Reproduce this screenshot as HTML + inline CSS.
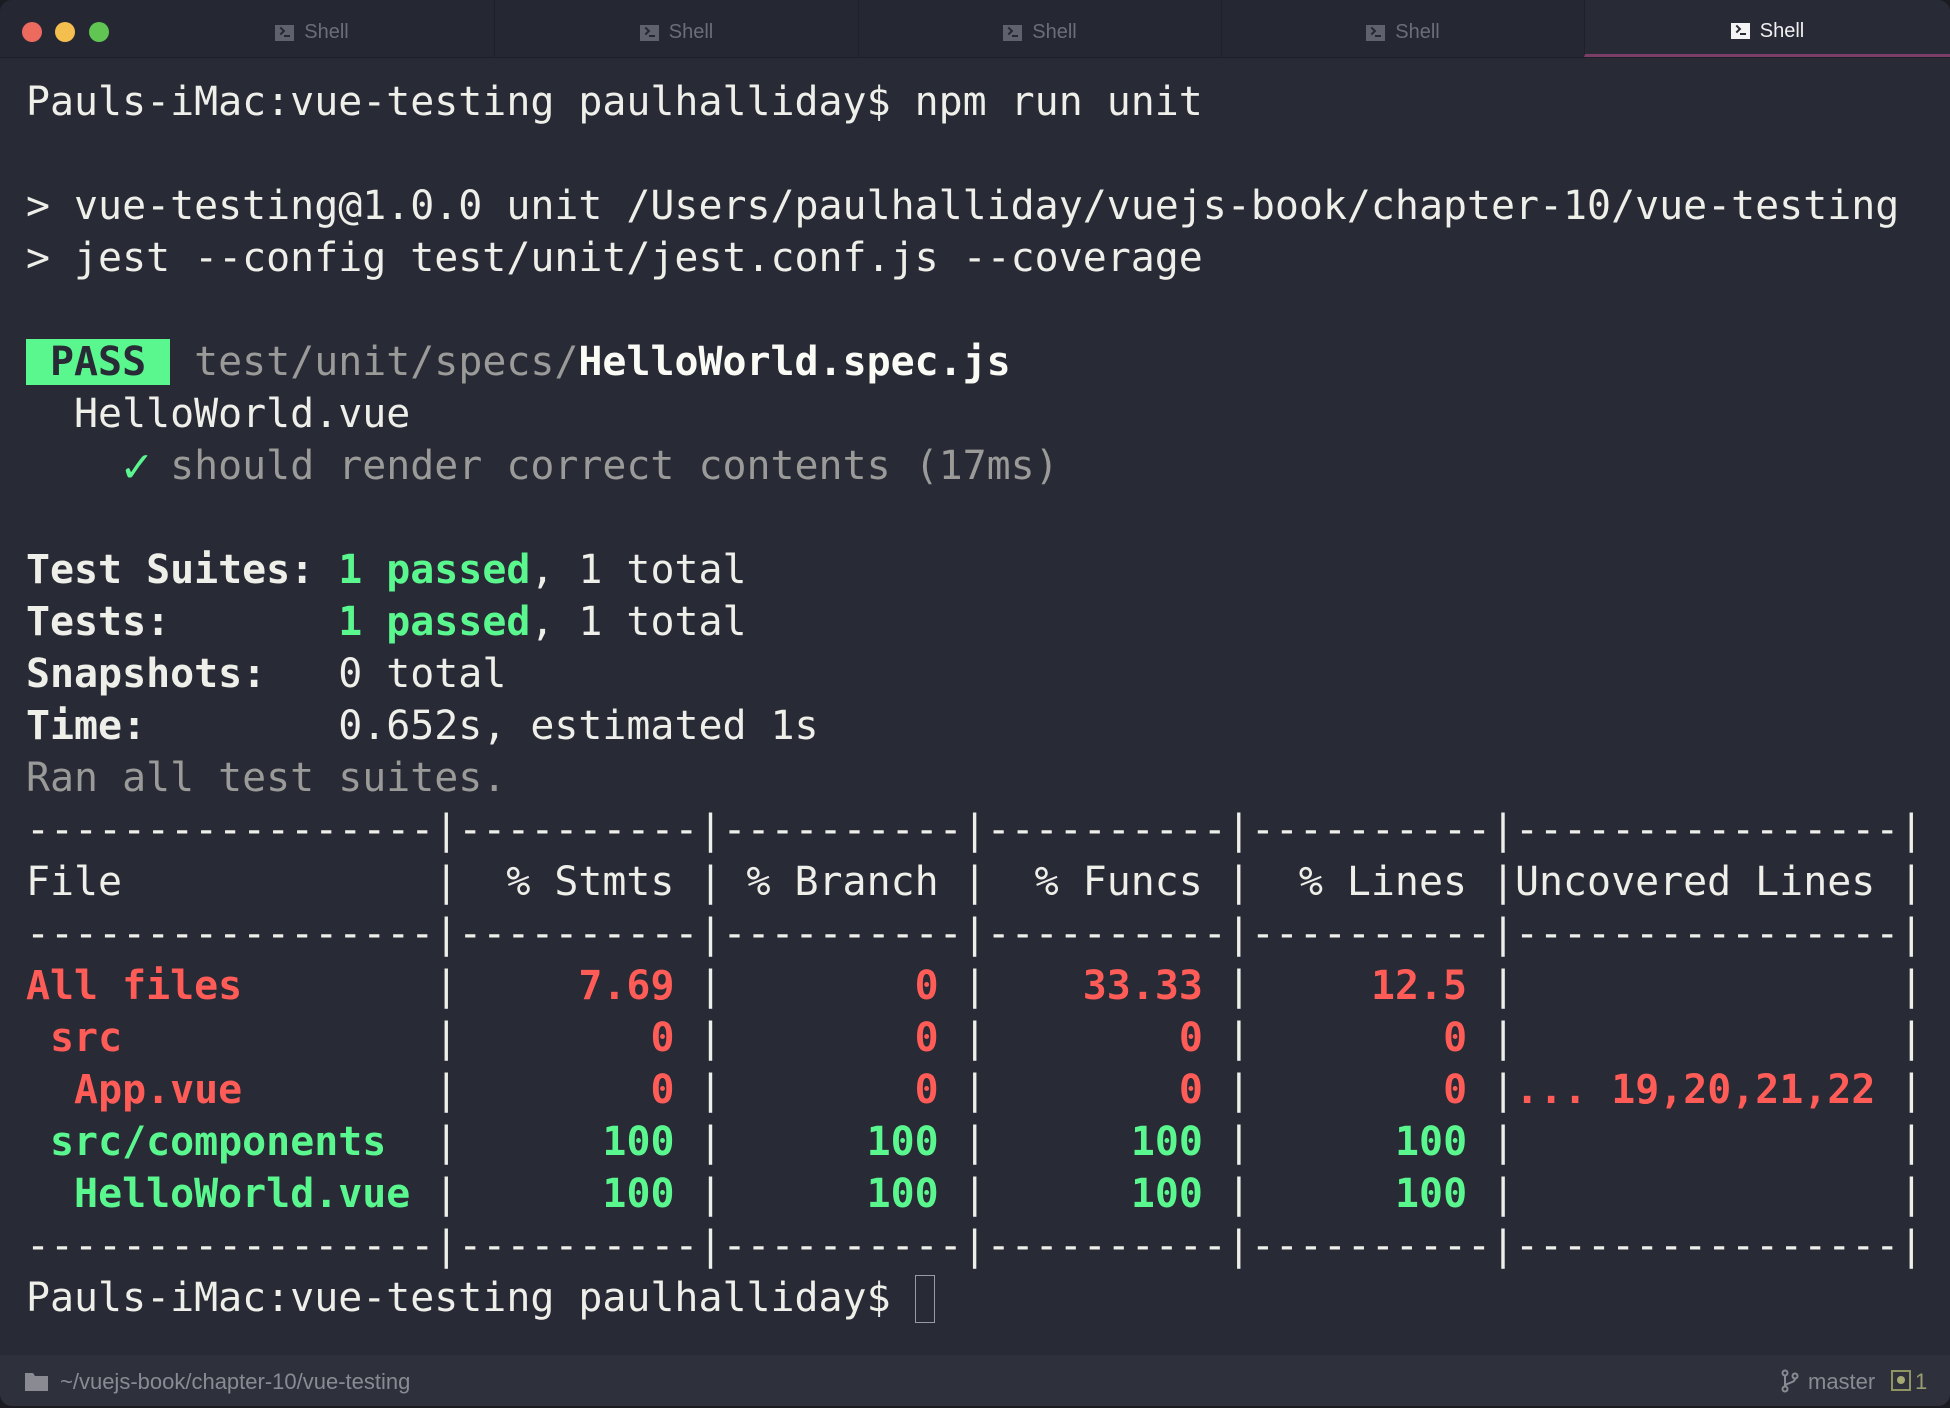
<!DOCTYPE html>
<html><head><meta charset="utf-8"><style>
html,body{margin:0;padding:0;background:#1b1c22;}
#win{position:relative;width:1950px;height:1406px;background:#282a36;border-radius:12px;overflow:hidden;}
#tabs{position:absolute;left:0;top:0;width:1950px;height:57px;background:#252733;border-bottom:1px solid #1e1f28;}
.dot{position:absolute;top:22px;width:20px;height:20px;border-radius:50%;}
.tab{position:absolute;top:0;height:57px;box-sizing:border-box;padding-top:8px;border-left:1px solid #1f2029;font:20px "Liberation Sans",sans-serif;color:#6b6d78;display:flex;align-items:center;justify-content:center;}
.tab .ic{width:19px;height:16px;background:#5f616d;margin-right:10px;position:relative;}
.tab .ic:after{content:"";position:absolute;left:3px;top:3px;width:4px;height:4px;border-right:2px solid #252733;border-bottom:2px solid #252733;transform:rotate(-45deg);}
.tab .ic:before{content:"";position:absolute;left:9px;top:10px;width:6px;height:2px;background:#252733;}
.tab.act{background:#282a36;color:#f0f0f0;border-bottom:3px solid #7a3e68;}
.tab.act .ic{background:#f4f4f4;}
.tab.act .ic:after{border-color:#282a36}.tab.act .ic:before{background:#282a36}
pre{position:absolute;left:26px;top:76px;margin:0;font:39.9px/52px "DejaVu Sans Mono","Liberation Mono",monospace;color:#efefe9;white-space:pre;}
b{font-weight:bold}
.g{color:#5af78e}.r{color:#ff5c57}.gr{color:#9a9a98}.w{color:#fbfbf6;font-weight:bold}
.pass{background:#5af78e;color:#282a36;font-weight:bold}
.ck{display:inline-block;width:24px;font-weight:bold;font-size:48px;line-height:40px;vertical-align:-3px;}
.cur{display:inline-block;width:20px;height:48px;border:1px solid #9a9aa0;box-sizing:border-box;vertical-align:-12px;}
#status{position:absolute;left:0;top:1355px;width:1950px;height:53px;background:#2e303b;font:22px "Liberation Sans",sans-serif;color:#8a8b92;}
</style></head><body><div id="win">
<div id="tabs">
<div class="dot" style="left:22px;background:#ed6a5e"></div>
<div class="dot" style="left:55px;background:#f5bf4f"></div>
<div class="dot" style="left:89px;background:#61c554"></div>
<div class="tab" style="left:130px;width:364px;border-left:none"><span class="ic"></span>Shell</div>
<div class="tab" style="left:494px;width:364px"><span class="ic"></span>Shell</div>
<div class="tab" style="left:858px;width:363px"><span class="ic"></span>Shell</div>
<div class="tab" style="left:1221px;width:363px"><span class="ic"></span>Shell</div>
<div class="tab act" style="left:1584px;width:366px"><span class="ic"></span>Shell</div>
</div>
<pre>Pauls-iMac:vue-testing paulhalliday$ npm run unit

&gt; vue-testing@1.0.0 unit /Users/paulhalliday/vuejs-book/chapter-10/vue-testing
&gt; jest --config test/unit/jest.conf.js --coverage

<span class="pass"> PASS </span> <span class="gr">test/unit/specs/</span><span class="w">HelloWorld.spec.js</span>
  HelloWorld.vue
    <span class="g ck">✓</span> <span class="gr">should render correct contents (17ms)</span>

<b>Test Suites: </b><b class="g">1 passed</b>, 1 total
<b>Tests:       </b><b class="g">1 passed</b>, 1 total
<b>Snapshots:   </b>0 total
<b>Time:        </b>0.652s, estimated 1s
<span class="gr">Ran all test suites.</span>
-----------------|----------|----------|----------|----------|----------------|
File             |  % Stmts | % Branch |  % Funcs |  % Lines |Uncovered Lines |
-----------------|----------|----------|----------|----------|----------------|
<b class="r">All files</b>        | <b class="r">    7.69</b> | <b class="r">       0</b> | <b class="r">   33.33</b> | <b class="r">    12.5</b> |                |
 <b class="r">src</b>             | <b class="r">       0</b> | <b class="r">       0</b> | <b class="r">       0</b> | <b class="r">       0</b> |                |
  <b class="r">App.vue</b>        | <b class="r">       0</b> | <b class="r">       0</b> | <b class="r">       0</b> | <b class="r">       0</b> |<b class="r">... 19,20,21,22</b> |
 <b class="g">src/components</b>  | <b class="g">     100</b> | <b class="g">     100</b> | <b class="g">     100</b> | <b class="g">     100</b> |                |
  <b class="g">HelloWorld.vue</b> | <b class="g">     100</b> | <b class="g">     100</b> | <b class="g">     100</b> | <b class="g">     100</b> |                |
-----------------|----------|----------|----------|----------|----------------|
Pauls-iMac:vue-testing paulhalliday$ <span class="cur"></span></pre>
<div id="status">
<svg style="position:absolute;left:25px;top:16px" width="23" height="20" viewBox="0 0 23 20"><path d="M0 2h8l2 3h13v15H0z" fill="#8a8b92"/></svg>
<span style="position:absolute;left:60px;top:14px">~/vuejs-book/chapter-10/vue-testing</span>
<svg style="position:absolute;left:1781px;top:14px" width="18" height="24" viewBox="0 0 18 24" fill="none" stroke="#8a8b92" stroke-width="2"><circle cx="4" cy="4" r="2.5"/><circle cx="4" cy="20" r="2.5"/><circle cx="14" cy="7" r="2.5"/><path d="M4 6.5v11M14 9.5c0 5-10 4-10 8"/></svg>
<span style="position:absolute;left:1808px;top:14px">master</span>
<div style="position:absolute;left:1891px;top:15px;width:16px;height:17px;border:2px solid #8f9462;"><div style="position:absolute;left:4px;top:4px;width:8px;height:8px;border-radius:50%;background:#a6aa72"></div></div>
<span style="position:absolute;left:1915px;top:14px;color:#9a9d72">1</span>
</div>
</div></body></html>
